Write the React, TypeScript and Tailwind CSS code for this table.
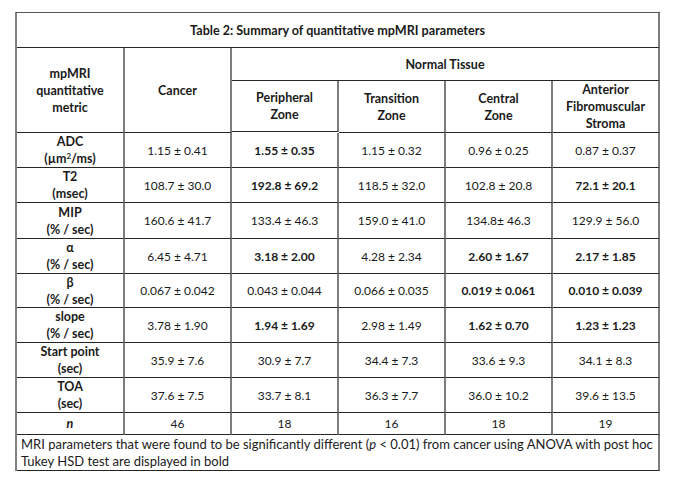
import React from 'react'

type Row = {
  label: React.ReactNode[]
  vals: string[]
  bold: boolean[]
  h: string
}

const rows: Row[] = [
  {
    label: ['ADC', <>(µm<sup className="text-[8px] leading-none">2</sup>/ms)</>],
    vals: ['1.15 ± 0.41', '1.55 ± 0.35', '1.15 ± 0.32', '0.96 ± 0.25', '0.87 ± 0.37'],
    bold: [false, true, false, false, false],
    h: 'h-[35px]',
  },
  {
    label: ['T2', '(msec)'],
    vals: ['108.7 ± 30.0', '192.8 ± 69.2', '118.5 ± 32.0', '102.8 ± 20.8', '72.1 ± 20.1'],
    bold: [false, true, false, false, true],
    h: 'h-[35px]',
  },
  {
    label: ['MIP', '(% / sec)'],
    vals: ['160.6 ± 41.7', '133.4 ± 46.3', '159.0 ± 41.0', '134.8± 46.3', '129.9 ± 56.0'],
    bold: [false, false, false, false, false],
    h: 'h-[36px]',
  },
  {
    label: ['α', '(% / sec)'],
    vals: ['6.45 ± 4.71', '3.18 ± 2.00', '4.28 ± 2.34', '2.60 ± 1.67', '2.17 ± 1.85'],
    bold: [false, true, false, true, true],
    h: 'h-[35px]',
  },
  {
    label: ['β', '(% / sec)'],
    vals: ['0.067 ± 0.042', '0.043 ± 0.044', '0.066 ± 0.035', '0.019 ± 0.061', '0.010 ± 0.039'],
    bold: [false, false, false, true, true],
    h: 'h-[34px]',
  },
  {
    label: ['slope', '(% / sec)'],
    vals: ['3.78 ± 1.90', '1.94 ± 1.69', '2.98 ± 1.49', '1.62 ± 0.70', '1.23 ± 1.23'],
    bold: [false, true, false, true, true],
    h: 'h-[35px]',
  },
  {
    label: ['Start point', '(sec)'],
    vals: ['35.9 ± 7.6', '30.9 ± 7.7', '34.4 ± 7.3', '33.6 ± 9.3', '34.1 ± 8.3'],
    bold: [false, false, false, false, false],
    h: 'h-[35px]',
  },
  {
    label: ['TOA', '(sec)'],
    vals: ['37.6 ± 7.5', '33.7 ± 8.1', '36.3 ± 7.7', '36.0 ± 10.2', '39.6 ± 13.5'],
    bold: [false, false, false, false, false],
    h: 'h-[35px]',
  },
]

const cell =
  'flex flex-col items-center justify-center text-center border-r-2 border-r-[#7d7d7d] border-b border-b-[#262626]'

export default function App() {
  return (
    <div className="min-h-[485px] w-[673px] bg-white pl-[15px] pt-[12px] font-['Lato',sans-serif] text-[12px] leading-[17px] text-[#1a1a1a]">
      <div className="grid w-[645px] grid-cols-[108px_107px_107px_107px_107px_107px] border-l-2 border-t border-l-[#808080] border-t-[#555]">
        {/* title */}
        <div className={`${cell} col-span-6 h-[35px] text-[12.6px] font-bold`}>
          Table 2: Summary of quantitative mpMRI parameters
        </div>

        {/* header */}
        <div className={`${cell} row-span-2 text-[12.5px] font-bold`}>
          <span>mpMRI</span>
          <span>quantitative</span>
          <span>metric</span>
        </div>
        <div className={`${cell} row-span-2 text-[12.5px] font-bold`}>Cancer</div>
        <div className={`${cell} col-span-4 h-[33px] text-[12.5px] font-bold`}>Normal Tissue</div>
        <div className={`${cell} h-[51px] text-[12.5px] font-bold`}>
          <span>Peripheral</span>
          <span>Zone</span>
        </div>
        <div className={`${cell} text-[12.5px] font-bold`}>
          <span>Transition</span>
          <span>Zone</span>
        </div>
        <div className={`${cell} text-[12.5px] font-bold`}>
          <span>Central</span>
          <span>Zone</span>
        </div>
        <div className={`${cell} text-[12.5px] font-bold`}>
          <span>Anterior</span>
          <span>Fibromuscular</span>
          <span>Stroma</span>
        </div>

        {/* data */}
        {rows.map((r, i) => (
          <React.Fragment key={i}>
            <div className={`${cell} ${r.h} text-[12.5px] font-bold`}>
              {r.label.map((l, j) => (
                <span key={j}>{l}</span>
              ))}
            </div>
            {r.vals.map((v, j) => (
              <div key={j} className={`${cell} ${r.bold[j] ? 'font-bold' : ''}`}>
                {v}
              </div>
            ))}
          </React.Fragment>
        ))}

        {/* n */}
        <div className={`${cell} h-[22px] text-[12.5px] font-bold italic`}>n</div>
        {['46', '18', '16', '18', '19'].map((v, j) => (
          <div key={j} className={cell}>
            {v}
          </div>
        ))}

        {/* footnote */}
        <div className="col-span-6 flex h-[36px] flex-col border-r-2 border-b border-r-[#7d7d7d] border-b-[#262626] px-[4px] pt-[1px] text-[13px] leading-[17px]">
          <p className="whitespace-nowrap">
            MRI parameters that were found to be significantly different (<i>p</i> &lt; 0.01) from cancer using ANOVA with post hoc
          </p>
          <p className="whitespace-nowrap">Tukey HSD test are displayed in bold</p>
        </div>
      </div>
    </div>
  )
}
